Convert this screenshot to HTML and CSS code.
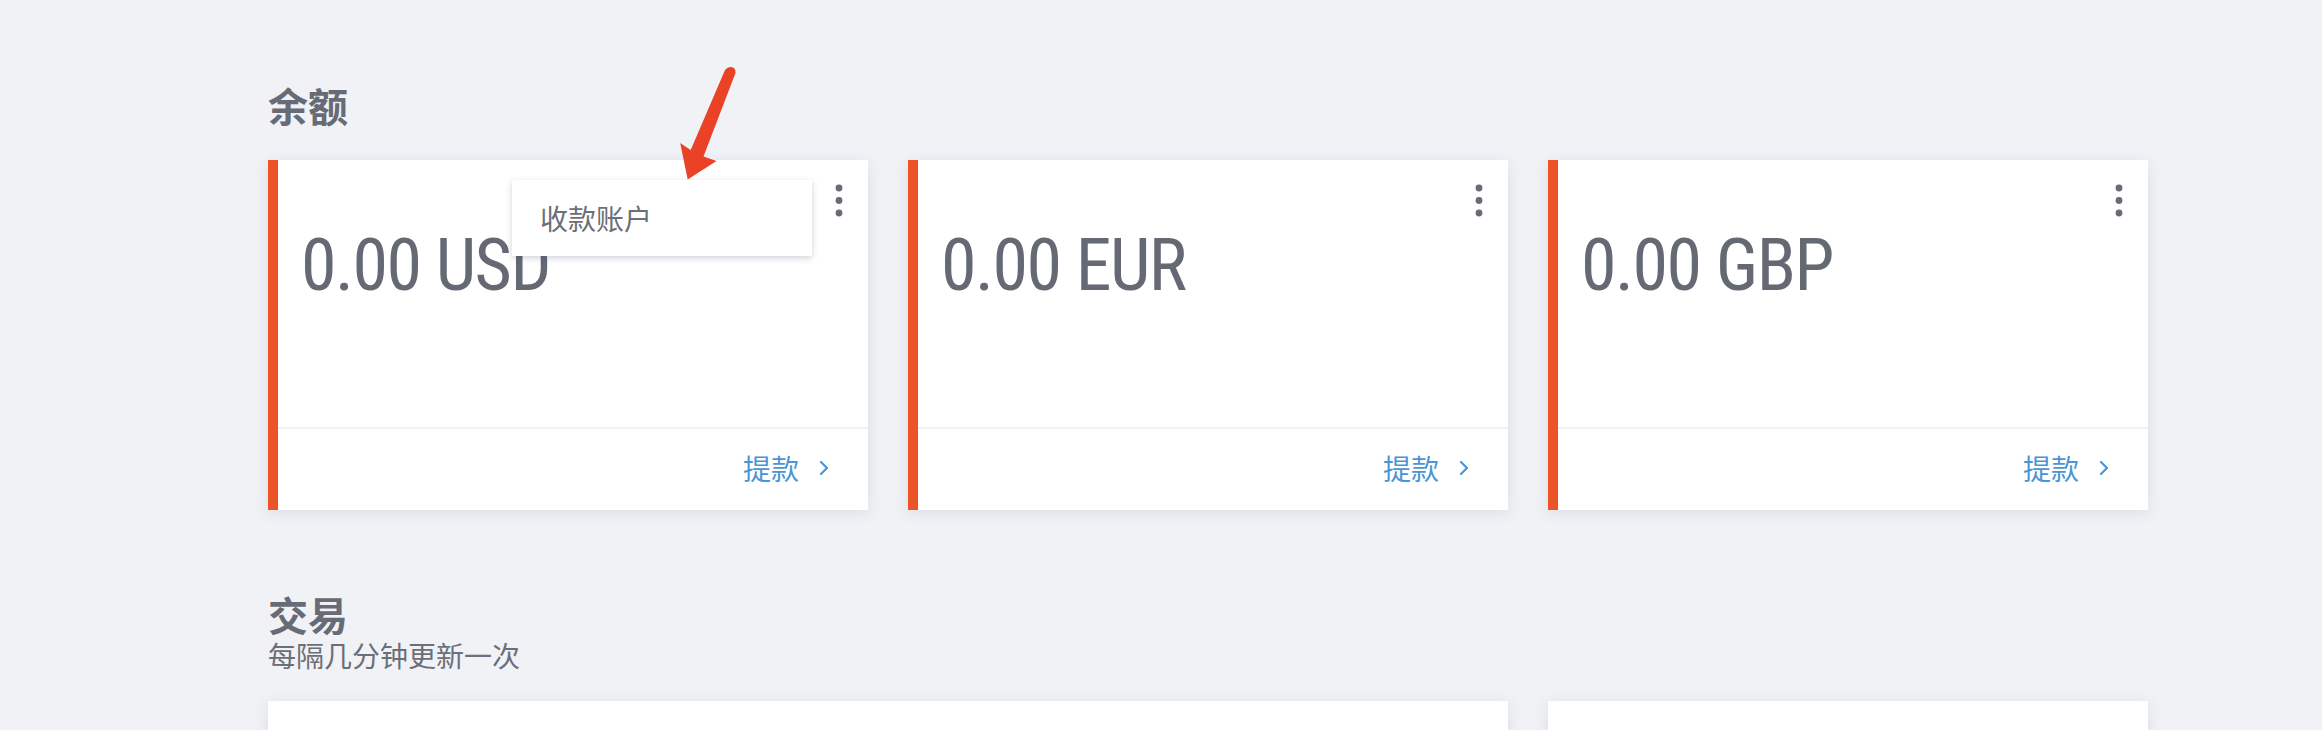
FILE: index.html
```html
<!DOCTYPE html>
<html lang="zh-CN">
<head>
<meta charset="utf-8">
<title>余额</title>
<link rel="stylesheet" href="styles.css">
</head>
<body>
<div class="page">
  <section class="section">
    <h2 class="section-title">余额</h2>
    <div class="cards">
      <div class="card">
        <div class="card-body">
          <div class="amount">0.00 USD</div>
          <svg class="kebab" viewBox="0 0 8 33" width="8" height="33"><circle cx="4" cy="4" r="3.4"/><circle cx="4" cy="16.5" r="3.4"/><circle cx="4" cy="29" r="3.4"/></svg>
        </div>
        <div class="card-footer">
          <span class="link">提款</span>
          <svg class="chev" viewBox="0 0 10 16" width="10" height="16"><path d="M2 2 L8 8 L2 14"/></svg>
        </div>
        <div class="menu"><span class="menu-item">收款账户</span></div>
      </div>
      <div class="card">
        <div class="card-body">
          <div class="amount">0.00 EUR</div>
          <svg class="kebab" viewBox="0 0 8 33" width="8" height="33"><circle cx="4" cy="4" r="3.4"/><circle cx="4" cy="16.5" r="3.4"/><circle cx="4" cy="29" r="3.4"/></svg>
        </div>
        <div class="card-footer">
          <span class="link">提款</span>
          <svg class="chev" viewBox="0 0 10 16" width="10" height="16"><path d="M2 2 L8 8 L2 14"/></svg>
        </div>
      </div>
      <div class="card">
        <div class="card-body">
          <div class="amount">0.00 GBP</div>
          <svg class="kebab" viewBox="0 0 8 33" width="8" height="33"><circle cx="4" cy="4" r="3.4"/><circle cx="4" cy="16.5" r="3.4"/><circle cx="4" cy="29" r="3.4"/></svg>
        </div>
        <div class="card-footer">
          <span class="link">提款</span>
          <svg class="chev" viewBox="0 0 10 16" width="10" height="16"><path d="M2 2 L8 8 L2 14"/></svg>
        </div>
      </div>
    </div>
  </section>
  <section class="section section-tx">
    <h2 class="section-title">交易</h2>
    <p class="section-sub">每隔几分钟更新一次</p>
    <div class="cards">
      <div class="panel panel-wide"></div>
      <div class="panel"></div>
    </div>
  </section>
</div>
<svg class="annot-arrow" viewBox="0 0 90 130" width="90" height="130"><path d="M65 15 Q69 10 74 13 Q76 15 75.5 18 L43.5 101.5 L56.5 106 L27.7 124.5 L20.2 88 L30.7 95 Z"/></svg>
</body>
</html>
```
FILE: styles.css
```css
html, body {
  margin: 0;
  padding: 0;
}
body {
  background: #f1f2f6;
  font-family: "Noto Sans CJK SC", "Noto Sans", sans-serif;
  color: #676b75;
  position: relative;
  height: 730px;
  overflow: hidden;
}
.page {
  width: 1880px;
  margin-left: 268px;
  padding-top: 81px;
}
.section-title {
  margin: 0;
  font-size: 40px;
  line-height: 48px;
  font-weight: 700;
  color: #676b75;
}
.section-sub {
  margin: 0;
  font-size: 28px;
  line-height: 34px;
  color: #6b6f78;
}
.cards {
  display: grid;
  grid-template-columns: repeat(3, 600px);
  column-gap: 40px;
  margin-top: 31px;
}
.section-tx {
  margin-top: 80px;
}
.section-tx .cards {
  margin-top: 29px;
}
.card {
  position: relative;
  height: 350px;
  background: #fff;
  border-left: 10px solid #ec5428;
  box-shadow: 0 3px 14px rgba(40, 50, 80, 0.10);
  display: flex;
  flex-direction: column;
}
.card-body {
  height: 267px;
  display: flex;
  justify-content: space-between;
  align-items: flex-start;
  border-bottom: 2px solid #f1f2f6;
}
.amount {
  margin-top: 70px;
  margin-left: 23px;
  font-family: Roboto, "Liberation Sans", sans-serif;
  font-stretch: 77%;
  font-size: 72px;
  line-height: 72px;
  letter-spacing: -1.5px;
  color: #646974;
}
.kebab {
  margin-top: 24px;
  margin-right: 25px;
  fill: #676b75;
}
.card-footer {
  flex: 1;
  display: flex;
  justify-content: flex-end;
  align-items: center;
  padding-right: 39px;
  padding-bottom: 4px;
}
.link {
  font-size: 28px;
  line-height: 34px;
  color: #4b95d6;
}
.chev {
  margin-left: 20px;
  fill: none;
  stroke: #4b95d6;
  stroke-width: 2.2;
  stroke-linecap: round;
  stroke-linejoin: round;
}
.menu {
  position: absolute;
  left: 234px;
  top: 20px;
  width: 300px;
  height: 76px;
  background: #fff;
  box-shadow: 0 2px 6px rgba(40, 50, 80, 0.22);
  display: flex;
  align-items: center;
  padding-left: 28px;
  box-sizing: border-box;
  z-index: 2;
}
.menu-item {
  font-size: 28px;
  line-height: 34px;
  color: #6b6f78;
}
.panel {
  height: 300px;
  background: #fff;
  box-shadow: 0 3px 14px rgba(40, 50, 80, 0.10);
}
.panel-wide {
  grid-column: span 2;
}
.annot-arrow {
  position: absolute;
  left: 660px;
  top: 55px;
  fill: #ea4227;
  z-index: 5;
}
```
